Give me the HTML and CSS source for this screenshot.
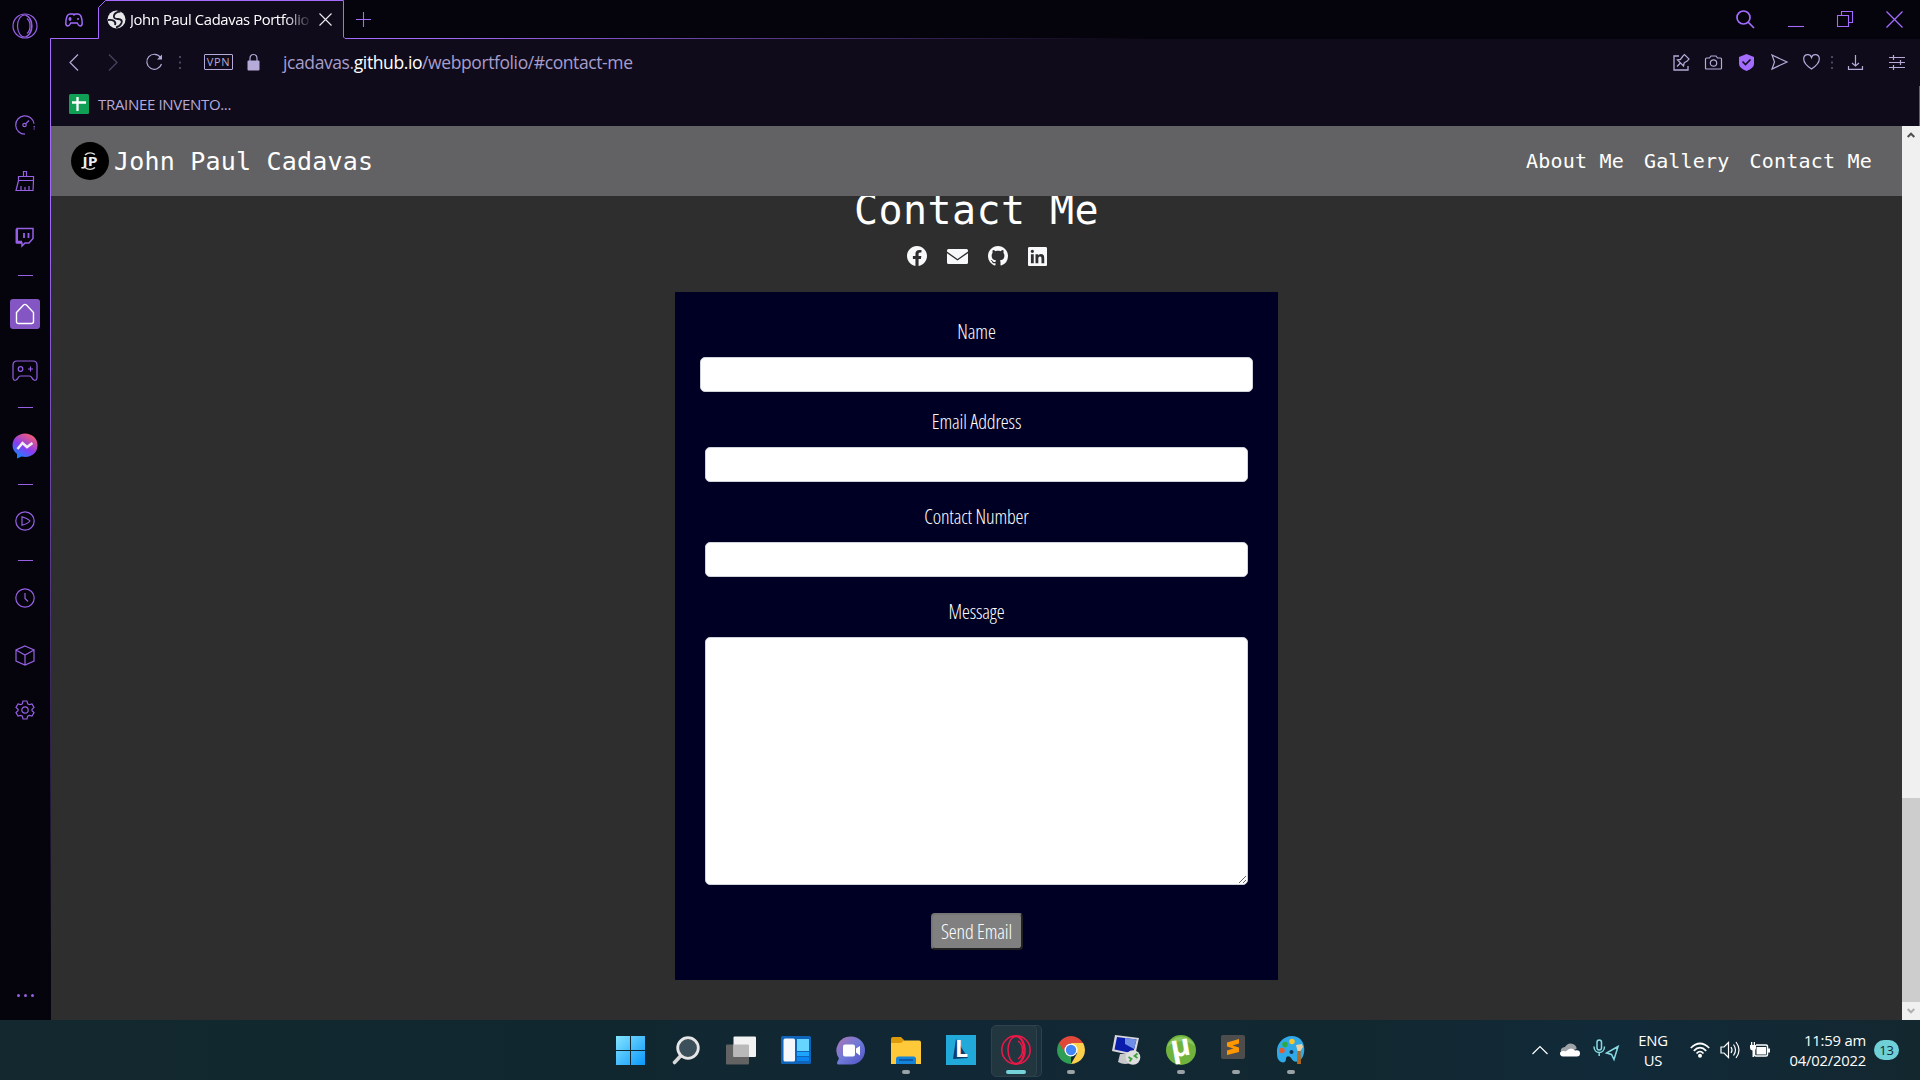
FILE: index.html
```html
<!DOCTYPE html>
<html lang="en">
<head>
<meta charset="utf-8">
<title>John Paul Cadavas Portfolio</title>
<link rel="stylesheet" href="styles.css">
</head>
<body>
<div class="browser">
  <aside class="sidebar">
    <svg width="26" height="26" viewBox="0 0 26 26"><circle cx="13" cy="13" r="12"/><ellipse cx="12.500" cy="13" rx="7" ry="11"/><path d="M14 2.500c8 3 8 18 0 21M15 5.500c4 3 4 12 0 15"/></svg>
    <span></span>
    <svg width="20" height="20" viewBox="0 0 20 20"><path d="M10 19.200a9.200 9.200 0 1 1 9-10.500"/><path d="M19.200 11v3.500" stroke-dasharray="1.500 1"/><circle cx="9.500" cy="10" r="1.700"/><path d="M11 8.500l3-3"/></svg>
    <svg width="20" height="22" viewBox="0 0 20 22"><path d="M8.500 6V1.500h3V6M3.500 6.500h15v4h-15zM3.500 10.500L1 20.500h17l.5-10M6 20v-4M10 20v-3M14 20v-4"/></svg>
    <svg width="20" height="20" viewBox="0 0 20 20"><path d="M2 1.500h16v10L14 16h-4l-3 3v-3H2z" stroke-width="1.500"/><path d="M1.800 2v13H7" stroke-width="2.500"/><path d="M9 6v5M13.500 6v5" stroke-width="1.800"/></svg>
    <i class="dash"></i>
    <div class="home"><svg width="20" height="22" viewBox="0 0 20 22"><path d="M1.500 9.500L8.500 2q1.500-1.200 3 0l7 7.500v9q0 2-2 2h-13q-2 0-2-2z"/></svg></div>
    <svg width="26" height="22" viewBox="0 0 26 22"><path d="M1 18V5q0-4 4-4h16q4 0 4 4v13q-.5 3-3 2-1.500-.8-2.300-2.500-.7-1.500-2.200-1.500h-9q-1.500 0-2.200 1.500Q5.500 19.200 4 20q-2.500 1-3-2z"/><circle cx="8.500" cy="9" r="2.300"/><path d="M18.500 6.500v5M16 9h5"/></svg>
    <i class="dash"></i>
    <svg width="26" height="26" viewBox="0 0 26 26"><defs><linearGradient id="msg" x1=".2" y1="1" x2=".8" y2="0"><stop offset="0" stop-color="#0a8cff"/><stop offset=".45" stop-color="#8a3cf0"/><stop offset="1" stop-color="#ff6068"/></linearGradient></defs><path d="M13 .5C6 .5.500 5.500.500 12.300c0 4 1.800 6.500 4.500 8.700v4.500l4.500-2c9 2 16-3 16-11.200C25.500 5.500 20 .5 13 .5z" fill="url(#msg)" stroke="none"/><path d="M5.500 16l5-6 4.500 4 5.500-4" stroke="#eee" stroke-width="2.600"/></svg>
    <i class="dash"></i>
    <svg width="20" height="20" viewBox="0 0 20 20"><circle cx="10" cy="10" r="9.200"/><path d="M7 5.800q6 1.700 8 4.200-2 2.700-8 4.200z"/></svg>
    <i class="dash"></i>
    <svg width="20" height="20" viewBox="0 0 20 20"><circle cx="10" cy="10" r="9.200"/><path d="M10 5v5.500l3 3"/></svg>
    <svg width="20" height="21" viewBox="0 0 20 21"><path d="M10 1l9 4v11l-9 4-9-4V5zM1 5l9 5 9-5M10 10v10"/></svg>
    <svg width="20" height="20" viewBox="0 0 20 20"><path d="M8 1h4l.7 2.800 1.500.9L17 3.900l2 3.500L17 9.200v1.600l2 1.800-2 3.500-2.800-.8-1.500.9L12 19H8l-.7-2.800-1.500-.9-2.800.8-2-3.500 2-1.800V9.200L1 7.400l2-3.500 2.800.8 1.500-.9z"/><circle cx="10" cy="10" r="3.200"/></svg>
    <span></span>
    <div class="more"><i></i><i></i><i></i></div>
  </aside>

  <div class="window">
    <div class="titlebar">
      <svg class="gx" width="18" height="14" viewBox="0 0 18 14"><path d="M5 1h3l1 1 1-1h3q4 0 4.200 9.500-.2 2.500-2 2.500-1.500 0-3-3h-6.400q-1.500 3-3 3-1.800 0-2-2.500Q1 1 5 1z"/><path d="M5 4v4M3.500 6h3M12 6h2"/></svg>
      <div class="tab">
        <svg width="19" height="19" viewBox="0 0 19 19"><circle cx="9.500" cy="9.500" r="9" fill="#e8e8ea"/><path d="M13.500 1.500Q8 2 7 5.500t4 3.500q5 .5 3.500 4T9 17.500" fill="none" stroke="#1b1828" stroke-width="1.900"/><path d="M1 10q4-.5 6 1t1 4" fill="none" stroke="#1b1828" stroke-width="1.900"/></svg>
        <span class="tab-title">John Paul Cadavas Portfolio</span>
        <svg class="tab-close" width="13" height="13" viewBox="0 0 13 13"><path d="M.5.5l12 12M12.500.5l-12 12"/></svg>
      </div>
      <svg class="plus" width="15" height="15" viewBox="0 0 15 15"><path d="M7.500 0v15M0 7.500h15"/></svg>
      <div class="window-buttons">
        <svg width="19" height="19" viewBox="0 0 19 19"><circle cx="7.500" cy="7.500" r="6.500" stroke-width="1.700"/><path d="M12 12l6 6" stroke-width="1.700"/></svg>
        <svg width="16" height="16" viewBox="0 0 16 16"><path d="M0 15.500h16"/></svg>
        <svg width="16" height="16" viewBox="0 0 16 16"><path d="M.5 4.500h11v11H.500zM4.500 4V.500h11v11H12"/></svg>
        <svg width="17" height="17" viewBox="0 0 17 17"><path d="M.5.5l16 16M16.500.5l-16 16" stroke-width="1.300"/></svg>
      </div>
    </div>

    <div class="toolbar">
      <svg width="10" height="17" viewBox="0 0 10 17"><path d="M9 .5l-8 8 8 8"/></svg>
      <svg class="off" width="10" height="17" viewBox="0 0 10 17"><path d="M1 .5l8 8-8 8"/></svg>
      <svg width="17" height="17" viewBox="0 0 17 17"><path d="M15.500 10a7.500 7.500 0 1 1-1-6.500"/><path d="M16 .5v5h-5z" fill="#b5aad8" stroke="none"/></svg>
      <svg class="off dots" width="2" height="13" viewBox="0 0 2 13"><path d="M1 0v13" stroke-dasharray="2 3.500" stroke-width="2"/></svg>
      <span class="vpn">VPN</span>
      <svg width="13" height="17" viewBox="0 0 13 17"><path d="M3 7V4.500q0-4 3.500-4t3.500 4V7"/><rect x=".5" y="6.500" width="12" height="10" rx="1" fill="#b5aad8" stroke="none"/></svg>
      <span class="url">jcadavas.<b>github.io</b>/webportfolio/#contact-me</span>
      <svg width="17" height="17" viewBox="0 0 17 17"><path d="M6 2H1v14h14v-4M10 2l-2.500 3.500L4.500 6l6 6 .7-3.200L15 6.500M7.200 9.200L4 12.500" stroke-width="1.300"/><path d="M10 2l1.500-1.500L16 5l-1.500 1.700"/></svg>
      <svg width="17" height="15" viewBox="0 0 17 15"><path d="M1.500 3h3L6 1h5l1.500 2h3q1 0 1 1v9q0 1-1 1h-14q-1 0-1-1V4q0-1 1-1z"/><circle cx="8.500" cy="8" r="3.200"/></svg>
      <svg width="15" height="17" viewBox="0 0 15 17"><path d="M7.500 0L15 3v7q0 4-7.500 7Q0 14 0 10V3z" fill="#a36cff" stroke="none"/><path d="M3.500 7.500l3 3 5-5" stroke="#110d1e" stroke-width="1.600"/></svg>
      <svg width="17" height="16" viewBox="0 0 17 16"><path d="M1 1l15 7-15 7 2.500-7z"/></svg>
      <svg width="17" height="16" viewBox="0 0 17 16"><path d="M8.500 15C4 12 .7 8.500.700 5c0-5 6.300-6 7.800-1.500C10-1 16.300 0 16.300 5c0 3.500-3.300 7-7.800 10z"/></svg>
      <svg class="off" width="2" height="13" viewBox="0 0 2 13"><path d="M1 0v13" stroke-dasharray="2 3.500" stroke-width="2"/></svg>
      <svg width="15" height="15" viewBox="0 0 15 15"><path d="M7.500 0v11M4 8l3.500 3L11 8M.5 11v3.300h14V11"/></svg>
      <svg width="16" height="15" viewBox="0 0 16 15"><path d="M0 2.500h16M0 7.500h16M0 12.500h16M4.500 0v5M11.500 5v5M4.500 10v5"/></svg>
    </div>

    <div class="bookmarks">
      <svg width="20" height="20" viewBox="0 0 20 20"><rect width="20" height="20" rx="1.500" fill="#10a055"/><path d="M8.500 3v14M3 8.500h14" stroke="#fff" stroke-width="2.300"/></svg>
      <span>TRAINEE INVENTO...</span>
    </div>

    <div class="viewport">
      <div class="page">
        <header class="navbar">
          <svg width="38" height="38" viewBox="0 0 38 38"><circle cx="19" cy="19" r="19"/><path d="M14 13a8 8 0 0 1 10-.5M14 25.500a8 8 0 0 0 10 0" fill="none" stroke="#ddd" stroke-width="1.400"/><text x="11.500" y="23.500" textLength="15" lengthAdjust="spacingAndGlyphs">JP</text></svg>
          <a class="brand">John Paul Cadavas</a>
          <nav><a>About Me</a><a>Gallery</a><a>Contact Me</a></nav>
        </header>
        <main class="contact">
          <h1>Contact Me</h1>
          <div class="social">
            <svg width="20" height="20" viewBox="8 8 496 496"><path d="M504 256C504 119 393 8 256 8S8 119 8 256c0 123.780 90.690 226.380 209.250 245V327.690h-63V256h63v-54.640c0-62.150 37-96.480 93.670-96.480 27.140 0 55.520 4.840 55.520 4.840v61h-31.280c-30.800 0-40.410 19.120-40.410 38.730V256h68.780l-11 71.690h-57.780V501C413.310 482.380 504 379.780 504 256z"/></svg>
            <svg width="21" height="15" viewBox="0 0 21 15"><path d="M1.500 0h18Q21 0 21 1.500v1L10.500 10 0 2.500v-1Q0 0 1.500 0zM0 4.200l10.500 7.300L21 4.200v9.300q0 1.500-1.500 1.500h-18Q0 15 0 13.500z"/></svg>
            <svg width="20" height="20" viewBox="0 0 16 16"><path d="M8 0C3.580 0 0 3.580 0 8c0 3.540 2.290 6.530 5.470 7.590.4.070.550-.170.550-.380 0-.190-.010-.820-.010-1.490-2.010.370-2.530-.490-2.690-.940-.090-.230-.480-.940-.820-1.130-.280-.150-.680-.520-.010-.530.630-.010 1.080.580 1.230.820.720 1.210 1.870.870 2.330.660.070-.520.280-.870.510-1.070-1.780-.200-3.640-.890-3.640-3.950 0-.870.310-1.590.820-2.150-.080-.200-.360-1.020.080-2.120 0 0 .670-.210 2.200.820.640-.180 1.320-.270 2-.270s1.360.090 2 .270c1.530-1.040 2.200-.820 2.200-.820.440 1.100.160 1.920.080 2.120.510.560.820 1.270.820 2.150 0 3.070-1.870 3.750-3.650 3.950.290.250.540.730.540 1.480 0 1.070-.010 1.930-.010 2.200 0 .210.150.460.550.380A8.010 8.010 0 0 0 16 8c0-4.420-3.580-8-8-8z"/></svg>
            <svg width="19" height="19" viewBox="0 32 448 448"><path d="M416 32H31.900C14.300 32 0 46.500 0 64.300v383.400C0 465.500 14.300 480 31.900 480H416c17.600 0 32-14.500 32-32.300V64.300c0-17.800-14.400-32.300-32-32.300zM135.400 416H69V202.200h66.500V416zm-33.200-243c-21.300 0-38.500-17.300-38.500-38.500S80.900 96 102.200 96c21.200 0 38.500 17.300 38.500 38.500 0 21.300-17.200 38.500-38.500 38.500zm282.100 243h-66.400V312c0-24.800-.5-56.700-34.500-56.700-34.600 0-39.900 27-39.900 54.900V416h-66.400V202.200h63.700v29.200h.9c8.900-16.800 30.600-34.500 62.200-34.500 66.500 0 78.900 43.800 78.900 100.900V416z"/></svg>
          </div>
          <form class="card">
            <label for="name">Name</label>
            <input id="name" class="wide">
            <label for="email">Email Address</label>
            <input id="email">
            <label for="phone">Contact Number</label>
            <input id="phone">
            <label for="message">Message</label>
            <textarea id="message"></textarea>
            <button type="button">Send Email</button>
          </form>
        </main>
      </div>
      <div class="scrollbar">
        <svg width="8" height="6" viewBox="0 0 8 6"><path d="M.7 5L4 1.700 7.300 5" stroke="#505050" stroke-width="2" fill="none"/></svg>
        <div class="thumb"></div>
        <svg width="8" height="6" viewBox="0 0 8 6"><path d="M.7 1L4 4.300 7.300 1" stroke="#b0b0b0" stroke-width="2" fill="none"/></svg>
      </div>
    </div>
  </div>
</div>

<svg class="frame" width="1920" height="1020" viewBox="0 0 1920 1020"><defs><radialGradient id="glow" gradientUnits="userSpaceOnUse" cx="200" cy="20" r="950"><stop offset="0" stop-color="#a76bff"/><stop offset=".25" stop-color="#a36afa"/><stop offset=".8" stop-color="#a36afa" stop-opacity=".25"/><stop offset="1" stop-color="#a36afa" stop-opacity="0"/></radialGradient></defs><path d="M50.500 1020V38.500h48V7.500l7-7h238V37l1.500 1.500H1920" fill="none" stroke="url(#glow)"/><path d="M1919.500 86v40" stroke="#626068"/></svg>

<footer class="taskbar">
  <div class="apps">
    <div class="app"><svg width="29" height="29" viewBox="0 0 29 29"><defs><linearGradient id="win" gradientUnits="userSpaceOnUse" x1="0" y1="0" x2="29" y2="29"><stop offset="0" stop-color="#84e4ff"/><stop offset="1" stop-color="#0a98fb"/></linearGradient></defs><path d="M0 0h14v14H0zM15 0h14v14H15zM0 15h14v14H0zM15 15h14v14H15z" fill="url(#win)"/></svg></div>
    <div class="app"><svg width="28" height="29" viewBox="0 0 28 29"><path d="M9.500 19L2.500 26.500" stroke="#d8d8d8" stroke-width="3.600" stroke-linecap="round"/><circle cx="16" cy="12" r="10.300" fill="#3b505a" stroke="#e6e6e6" stroke-width="2.800"/></svg></div>
    <div class="app"><svg width="30" height="29" viewBox="0 0 30 29"><rect y="8.500" width="23" height="20" rx="1" fill="#636363"/><rect x="7.500" y=".5" width="22.500" height="20.500" rx="1" fill="#f2f2f2"/><path d="M7.500 8.500H22q1 0 1 1V21H7.500z" fill="#b9b9b9"/></svg></div>
    <div class="app"><svg width="30" height="28" viewBox="0 0 30 28"><rect width="30" height="28" rx="1.500" fill="#0f63b8"/><rect x="2.500" y="2.500" width="11.500" height="23" rx="1.500" fill="#f5f7fa"/><path d="M16 3h12v12H16z" fill="#66d5ff"/><path d="M16 16h12v4H16z" fill="#1ba5ff"/><path d="M16 21h12v4H16z" fill="#0a84ee"/></svg></div>
    <div class="app"><svg width="30" height="29" viewBox="0 0 30 29"><defs><linearGradient id="chat" x1="0" y1="0" x2="1" y2="1"><stop offset="0" stop-color="#b074b4"/><stop offset=".5" stop-color="#6f7ad8"/><stop offset="1" stop-color="#5050c4"/></linearGradient></defs><path d="M15 .5A14 14 0 0 1 15 28.500H2q-2-1 0-4l1-2A14 14 0 0 1 15 .5z" fill="url(#chat)"/><rect x="7" y="8.500" width="12" height="12" rx="2" fill="#fff"/><path d="M20 12.500l4-2.500v9.500l-4-3z" fill="#fff"/></svg></div>
    <div class="app run"><svg width="30" height="27" viewBox="0 0 30 27"><path d="M0 2q0-2 2-2h8l3 3v7H0z" fill="#dd9a0b"/><path d="M0 6h10l3-2.500h15q2 0 2 2V27H0z" fill="#ffc93a"/><path d="M5 27v-5q0-2.500 2.500-2.500h15q2.500 0 2.500 2.500v5z" fill="#1483da"/><path d="M8 23h14" stroke="#0b4d96" stroke-width="1.500"/></svg></div>
    <div class="app"><svg width="30" height="30" viewBox="0 0 30 30"><rect width="30" height="30" fill="#21a9da"/><path d="M10 4L7 24l15-1z" fill="#0c3c70"/><text x="9" y="22" class="ltr">L</text></svg></div>
    <div class="app active"><svg width="30" height="30" viewBox="0 0 30 30" fill="none" stroke="#ee1848" stroke-width="1.500"><circle cx="15" cy="15" r="14.200"/><ellipse cx="15" cy="15" rx="8" ry="13.500"/><path d="M17 1.500c9.500 5 9.500 22 0 27M17 6c6 4 6 14 0 18"/></svg></div>
    <div class="app run"><svg width="28" height="28" viewBox="0 0 28 28"><path d="M14 14L14 28A14 14 0 0 1 1.880 7z" fill="#2f9e55"/><path d="M14 7h12.120A14 14 0 0 1 14 28l6-10.500z" fill="#fcd04a"/><path d="M1.880 7A14 14 0 0 1 26.120 7H14L8 11 7.500 16z" fill="#e0483a"/><circle cx="14" cy="14" r="6.500" fill="#fff"/><circle cx="14" cy="14" r="5.200" fill="#4285f4"/></svg></div>
    <div class="app"><svg width="30" height="30" viewBox="0 0 30 30"><path d="M9 19h10l3 8q-8 4-15 0z" fill="#c8c8ca"/><path d="M4 0l24 3-4 18L1 16z" fill="#d8d8dc"/><path d="M6 2l19.500 2.500-3.500 14L3.500 14.500z" fill="#0a1cab"/><path d="M14 3l11.500 1.500L23 14 14 9z" fill="#6f8fe6"/><circle cx="22" cy="22.500" r="7.300" fill="#dedede"/><path d="M17.500 22l3 2-2 2.500M26.500 18.500l-3 2.500 3 2" stroke="#3ca33c" stroke-width="1.800" fill="none"/></svg></div>
    <div class="app run"><svg width="30" height="30" viewBox="0 0 30 30"><circle cx="15" cy="15" r="15" fill="#6fb33d"/><path d="M1 12A15 15 0 0 1 29 11Q15 1 1 12z" fill="#8cc75e"/><text x="5" y="21" class="mu" transform="rotate(-10 15 15)">µ</text></svg></div>
    <div class="app run"><svg class="sublime" width="24" height="24" viewBox="0 0 24 24"><rect width="24" height="24" rx="2" fill="#4d4d4d"/><path d="M6 7.500L18 4v4.500L11.500 10.500 18 12.500V17L6 20v-4.500l6.500-2L6 11.500z" fill="#ff9800"/></svg></div>
    <div class="app run"><svg width="30" height="30" viewBox="0 0 30 30"><path d="M16 1C7 1 0 9 1 18c0 5 1 7 4 9 3 1 5 0 5-3 0-4 4-3 5-1 2 3 4 5 8 3C31 22 31 1 16 1z" fill="#2fa9e8"/><circle cx="6" cy="15.500" r="2.700" fill="#e75a2a"/><circle cx="9" cy="9.500" r="2.700" fill="#2cac3c"/><circle cx="16" cy="6.500" r="2.700" fill="#fbc52d"/><circle cx="15.500" cy="17" r="2" fill="#12365c"/><path d="M21.500 15h3l.5 14h-4z" fill="#b4681c"/><path d="M20 10l6-1 1 3-2.500 4h-3z" fill="#e9cfa6"/></svg></div>
  </div>
  <div class="tray">
    <svg width="16" height="10" viewBox="0 0 16 10"><path d="M.5 9L8 1.500 15.500 9"/></svg>
    <svg width="20" height="14" viewBox="0 0 20 14"><path d="M3 11Q-1 8 2 5q2-1 3-1 3-5 8-3 4 2 3.500 5z" fill="#9da3a6" stroke="none"/><path d="M3 13.500Q0 13 0 10.500 0 8 3 8l3 .2Q11 3 15 7.500q5-1 5 3 0 3-3 3z" fill="#fff" stroke="none"/></svg>
    <svg class="teal" width="26" height="22" viewBox="0 0 26 22"><rect x="4" y="1" width="4.500" height="10" rx="2.250"/><path d="M1 7.500c0 8 10.500 8 10.500 0M6.200 14v3M25 7.500L13.500 14l5 1.500 2.500 5z"/></svg>
    <div class="lang">ENG<br>US</div>
    <svg width="20" height="16" viewBox="0 0 20 16"><path d="M.8 6Q10-3 19.200 6M3.800 8.800Q10 2.500 16.200 8.800M6.500 11.500Q10 7.500 13.500 11.500" stroke-width="1.700"/><circle cx="10" cy="13.700" r="2" fill="#fff" stroke="none"/></svg>
    <svg width="20" height="18" viewBox="0 0 20 18"><path d="M1 6h3l4.500-4.500v15L4 12H1zM11 6q2 3 0 6M13.500 3.500q4 5.500 0 11M16 1q6 8 0 16"/></svg>
    <svg width="20" height="18" viewBox="0 0 20 18"><path d="M6 4h10q1.500 0 1.500 1.500v8q0 1.500-1.500 1.500H6q-1.500 0-1.500-1.500V9" stroke-width="1.500"/><path d="M6.500 6H16v7.500H6.500zM18 7.500h2v4h-2zM0 4h6v3q0 2-2 2.500V16H2.500V9.500Q0 9 0 7zM1 1h1.300v3H1zM3.800 1H5v3H3.800z" fill="#fff" stroke="none"/></svg>
    <div class="clock">11:59 am<br>04/02/2022</div>
    <span class="badge">13</span>
  </div>
</footer>
</body>
</html>
```

FILE: styles.css
```css
* { box-sizing: border-box; }

body {
  margin: 0;
  width: 1920px;
  height: 1080px;
  overflow: hidden;
  display: grid;
  grid-template-rows: 1020px 60px;
  background: #05030b;
  font-family: "Open Sans", "Noto Sans", sans-serif;
}

svg { display: block; flex: none; overflow: visible; }

.browser { display: grid; grid-template-columns: 51px 1fr; min-height: 0; }

/* left icon rail */
.sidebar {
  display: grid;
  grid-template-rows: 51px 45px 57px 56px 56px 20px 57px 58px 15px 62px 14px 60px 18px 58px 56px 54px 1fr 50px;
  align-items: center;
  justify-items: center;
  padding-right: 1px;
}
.sidebar svg { fill: none; stroke: #9560e4; stroke-width: 1.2; }
.dash { width: 15px; height: 1px; background: #9560e4; }
.home {
  width: 30px;
  height: 30px;
  border-radius: 3px;
  background: #8456c4;
  display: grid;
  place-items: center;
}
.sidebar .home svg { stroke: #fff; stroke-width: 1.4; }
.more { display: flex; gap: 4px; }
.more i { width: 3px; height: 3px; border-radius: 50%; background: #9560e4; }

.window {
  display: grid;
  grid-template-rows: 39px 46px 41px 1fr;
  background: #0f0b1b;
  min-width: 0;
  min-height: 0;
}

/* outline round the active tab and the window's left edge */
.frame { position: absolute; left: 0; top: 0; pointer-events: none; }

.titlebar { display: flex; align-items: center; background: #05030b; padding-left: 14px; }
.titlebar svg { fill: none; stroke: #a36cff; stroke-width: 1.1; }
.titlebar .gx { margin-right: 15px; stroke-width: 1.5; }
.tab {
  width: 246px;
  height: 39px;
  background: #0f0b1b;
  clip-path: polygon(8px 0, 100% 0, 100% 100%, 0 100%, 0 8px);
  display: flex;
  align-items: center;
  padding: 0 0 1px 9px;
}
.tab svg:first-child { stroke: none; }
.tab-title {
  width: 182px;
  margin-left: 4px;
  overflow: hidden;
  white-space: nowrap;
  color: #fff;
  font-size: 14.8px;
  letter-spacing: -0.38px;
  mask-image: linear-gradient(90deg, #000 155px, transparent 182px);
}
.tab .tab-close { stroke: #eee; margin-left: 7px; }
.plus { margin: 0 0 1px 12px; }
.window-buttons { margin-left: auto; margin-right: 17px; padding-bottom: 1px; display: flex; align-items: center; gap: 33px; }

.toolbar {
  display: grid;
  grid-template-columns: 46px 32px 50px 22px 35px 34px 1fr 32px 32px 34px 32px 32px 10px 36px 47px;
  align-items: center;
  justify-items: center;
}
.toolbar svg { fill: none; stroke: #b5aad8; stroke-width: 1.2; }
.toolbar .off { stroke: #4a4560; }
.toolbar .dots { justify-self: start; }
.vpn {
  width: 29px;
  height: 16px;
  border: 1px solid #b5aad8;
  border-radius: 1px;
  color: #b5aad8;
  font-size: 11px;
  line-height: 14px;
  text-align: center;
  letter-spacing: 0.6px;
}
.url { justify-self: start; padding-left: 13px; color: #a79dcb; font-size: 17.5px; letter-spacing: -0.4px; }
.url b { font-weight: 400; color: #fff; }

.bookmarks {
  display: flex;
  align-items: center;
  gap: 9px;
  padding: 0 0 4px 18px;
  color: #b5aad8;
  font-size: 15px;
  line-height: 20px;
  letter-spacing: -0.32px;
}

/* web page */
.viewport { display: grid; grid-template-columns: 1fr 18px; min-height: 0; }
.page { background: #2e2e2e; color: #fff; display: flex; flex-direction: column; min-height: 0; overflow: hidden; }
.navbar {
  position: relative;
  z-index: 1;
  flex: none;
  height: 70px;
  background: #626264;
  display: flex;
  align-items: center;
  padding: 0 30px 0 20px;
  font-family: "DejaVu Sans Mono", monospace;
}
.navbar text { font: bold 12px "Open Sans", sans-serif; fill: #eee; }
.brand { margin-left: 5px; font-size: 25px; letter-spacing: 0.2px; }
.navbar nav { margin-left: auto; display: flex; gap: 20px; font-size: 20px; letter-spacing: 0.2px; }
.contact { display: flex; flex-direction: column; align-items: center; margin-top: -11px; }
.contact h1 {
  margin: 0;
  font: 400 40px/50px "DejaVu Sans Mono", monospace;
  letter-spacing: 0.4px;
}
.social { display: flex; align-items: center; gap: 20px; height: 20px; margin: 11px 0 26px; fill: #f8f9fa; }

.card {
  width: 603px;
  height: 688px;
  background: #000024;
  display: flex;
  flex-direction: column;
  align-items: center;
}
.card label, .card button {
  font-family: "Open Sans", sans-serif;
  font-size: 20px;
  font-weight: 340;
  font-stretch: 75%;
  line-height: 30px;
  letter-spacing: -0.15px;
}
.card label { margin: 20px 0 10px; }
.card label:first-child { margin-top: 25px; }
.card input, .card textarea {
  width: 543px;
  height: 35px;
  border: 1px solid #ced4da;
  border-radius: 5px;
  background: #fff;
  flex: none;
}
.card .wide { width: 553px; margin-bottom: -5px; }
.card textarea { height: 248px; }
.card .wide + label { margin-top: 20px; }
.card #email + label, .card #phone + label { margin-top: 20px; }
.card button {
  margin-top: 28px;
  width: 92px;
  height: 37px;
  padding: 0;
  border: 2px outset #767676;
  border-radius: 4px;
  background: #808080;
  color: #fff;
}

.scrollbar {
  background: #f0f0f0;
  display: grid;
  grid-template-rows: 18px 1fr 18px;
  align-items: center;
  justify-items: center;
}
.thumb { width: 18px; height: 204px; background: #cdcdcd; align-self: end; }

/* desktop taskbar */
.taskbar {
  background: linear-gradient(90deg, #13292f, #11272f 30%, #112735 50%, #122830 70%, #112a39 84%, #13272f);
  display: grid;
  grid-template-columns: 603px 715px 1fr;
}
.apps { grid-column: 2; display: grid; grid-template-columns: repeat(13, 55px); }
.app { position: relative; display: grid; place-items: center; }
.app svg { position: relative; }
.run::after, .active::after {
  content: "";
  position: absolute;
  bottom: 6px;
  width: 8px;
  height: 4px;
  border-radius: 2px;
  background: #9aa2a7;
}
.active::after { width: 20px; background: #75d3da; }
.active::before {
  content: "";
  position: absolute;
  left: 3px;
  top: 5px;
  width: 44px;
  height: 50px;
  border: 1px solid #2d424c;
  border-radius: 5px;
  background: #223640;
  box-shadow: 5px 0 0 -1px #1b303a, 5px 0 0 0 #2d424c;
}
.sublime { margin: 0 6px 6px 0; }
.ltr { font: bold 23px "Open Sans", sans-serif; fill: #fff; }
.mu { font: bold 30px "Open Sans", sans-serif; fill: #fff; }

.tray {
  display: grid;
  grid-template-columns: 28px 33px 43px 54px 30px 30px 30px 86px 33px;
  align-items: center;
  justify-content: end;
  padding-right: 21px;
  color: #fff;
  font-size: 14.8px;
  line-height: 20px;
  letter-spacing: -0.2px;
}
.tray svg { fill: none; stroke: #fff; stroke-width: 1.2; }
.tray .teal { stroke: #86dbe0; stroke-width: 1.5; }
.lang { text-align: center; width: 34px; justify-self: start; }
.clock { text-align: right; }
.badge {
  justify-self: end;
  width: 25px;
  height: 20px;
  border-radius: 10px;
  background: #6fd0d8;
  color: #0c2a30;
  font-size: 13px;
  text-align: center;
}
```
